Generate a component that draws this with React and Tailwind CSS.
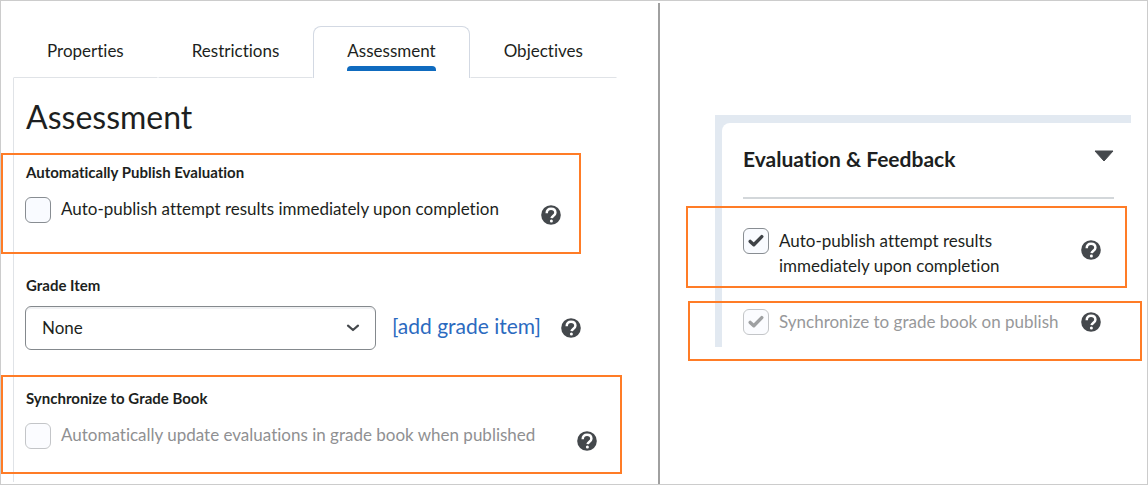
import React, { useState } from 'react';

const TABS = ['Properties', 'Restrictions', 'Assessment', 'Objectives'];

function HelpButton({ label, className = '' }) {
  return (
    <button type="button" aria-label={label} className={`h-5 w-5 shrink-0 cursor-pointer ${className}`}>
      <svg viewBox="0 0 20 20" className="h-5 w-5" aria-hidden="true">
        <circle cx="10" cy="10" r="9.8" fill="#44484c" />
        <path
          d="M5.7 8.2C5.7 5.3 7.4 3.8 10 3.8s4.4 1.6 4.4 3.9c0 2.9-3.6 3-3.8 5.5"
          fill="none"
          stroke="#fff"
          strokeWidth="2.5"
        />
        <circle cx="10.4" cy="16.1" r="1.5" fill="#fff" />
      </svg>
    </button>
  );
}

function Checkbox({ id, disabled = false, defaultChecked = false }) {
  return (
    <span className={`grid h-[26px] w-[26px] shrink-0 ${disabled ? 'opacity-50' : ''}`}>
      <input
        id={id}
        type="checkbox"
        disabled={disabled}
        defaultChecked={defaultChecked}
        className="peer col-start-1 row-start-1 h-[26px] w-[26px] appearance-none rounded-md border border-[#888d92] bg-[#f9fbff]"
      />
      <svg
        viewBox="0 0 26 26"
        className="pointer-events-none invisible col-start-1 row-start-1 h-[26px] w-[26px] peer-checked:visible"
        aria-hidden="true"
      >
        <path
          d="M7.2 13.4L10.8 16.8L18.8 8.6"
          fill="none"
          stroke="#3f4347"
          strokeWidth="3.4"
          strokeLinecap="round"
          strokeLinejoin="round"
        />
      </svg>
    </span>
  );
}

function Tabs({ active, onChange }) {
  return (
    <div role="tablist" className="flex">
      {TABS.map((tab) => (
        <button
          key={tab}
          type="button"
          role="tab"
          aria-selected={tab === active}
          onClick={() => onChange(tab)}
          className={`flex h-[52px] cursor-pointer flex-col items-center px-[33px] pt-3 ${
            tab === active
              ? 'rounded-t-lg border border-b-0 border-[#d3d9e3]'
              : 'border border-transparent border-b-[#e0e3e7]'
          }`}
        >
          <span className="leading-6">{tab}</span>
          {tab === active && <span className="mt-[3px] h-[5px] w-full rounded-t-sm bg-[#0f6bbf]" />}
        </button>
      ))}
    </div>
  );
}

function AssessmentPanel() {
  return (
    <div className="border-l border-[#e0e3e7] pb-2 pl-[11px]">
      <h1 className="pt-[19px] pl-px text-[32px] leading-10">Assessment</h1>

      {/* Auto publish */}
      <section className="mt-4 -ml-6 max-w-[580px] border-2 border-[#ff7c26] pt-[7px] pb-[27px] pl-[22px]">
        <h2 className="pl-px text-[15px] leading-5 font-bold">Automatically Publish Evaluation</h2>
        <div className="mt-[15px] flex items-start">
          <Checkbox id="auto-publish" />
          <label htmlFor="auto-publish" className="ml-[10px] leading-6">
            Auto-publish attempt results immediately upon completion
          </label>
          <HelpButton label="Help with automatic publishing" className="mt-2 ml-[42px]" />
        </div>
      </section>

      {/* Grade item */}
      <section className="mt-[21px]">
        <label htmlFor="grade-item" className="block pl-px text-[15px] leading-5 font-bold">
          Grade Item
        </label>
        <div className="mt-[11px] flex items-center">
          <div className="grid w-full max-w-[351px] items-center">
            <select
              id="grade-item"
              className="col-start-1 row-start-1 h-11 w-full appearance-none rounded-md border border-[#84898d] bg-white pl-4 shadow-[inset_0_2px_0_#f0f1f3]"
            >
              <option>None</option>
            </select>
            <svg
              viewBox="0 0 14 8"
              className="pointer-events-none col-start-1 row-start-1 mr-4 h-2 w-[14px] justify-self-end"
              aria-hidden="true"
            >
              <path
                d="M2 1.7L7 6L12 1.7"
                fill="none"
                stroke="#44484c"
                strokeWidth="2.2"
                strokeLinecap="round"
                strokeLinejoin="round"
              />
            </svg>
          </div>
          <a
            href="#add-grade-item"
            className="mt-2 ml-4 self-start text-[21px] leading-6 whitespace-nowrap text-[#2b6abf]"
          >
            [add grade item]
          </a>
          <HelpButton label="Help with grade items" className="ml-5" />
        </div>
      </section>

      {/* Grade book sync */}
      <section className="mt-[25px] -ml-6 max-w-[621px] border-2 border-[#ff7c26] pt-[11px] pb-[21px] pl-[22px]">
        <h2 className="pl-px text-[15px] leading-5 font-bold">Synchronize to Grade Book</h2>
        <div className="mt-[15px] flex items-start">
          <Checkbox id="grade-book" disabled />
          <label htmlFor="grade-book" className="ml-[10px] leading-6 text-[#8f9092]">
            Automatically update evaluations in grade book when published
          </label>
          <HelpButton label="Help with grade book updates" className="mt-2 ml-[42px]" />
        </div>
      </section>
    </div>
  );
}

function FeedbackPanel() {
  return (
    <div className="mt-[114px] mr-4 ml-[55px] self-start bg-[#e2e9f1] pt-2 pl-[7px]">
      <div className="rounded-tl-lg bg-white pl-[21px]">
        <div className="mr-[17px] flex items-start justify-between border-b-2 border-[#d3d7da] pt-[22px] pb-[24px]">
          <h2 className="text-[21px] leading-7 font-bold">Evaluation &amp; Feedback</h2>
          <button type="button" aria-label="Collapse Evaluation and Feedback" className="mt-[5px] cursor-pointer">
            <svg viewBox="0 0 20 12" className="h-3 w-5" aria-hidden="true">
              <path d="M1 1h18l-9 10z" fill="#44484c" stroke="#44484c" strokeLinejoin="round" />
            </svg>
          </button>
        </div>

        <section className="mt-[7px] mr-1 -ml-[57px] flex items-start border-2 border-[#ff7c26] pt-5 pr-6 pb-2 pl-[55px]">
          <Checkbox id="panel-publish" defaultChecked />
          <label htmlFor="panel-publish" className="ml-[10px] max-w-[250px] leading-[25px]">
            Auto-publish attempt results immediately upon completion
          </label>
          <HelpButton label="Help with automatic publishing" className="mt-3 ml-auto" />
        </section>

        <section className="mt-[13px] -mr-[11px] -mb-[14px] -ml-[55px] flex items-center border-2 border-[#ff7c26] pt-[6px] pr-[39px] pb-6 pl-[53px]">
          <Checkbox id="panel-grade-book" disabled defaultChecked />
          <label htmlFor="panel-grade-book" className="ml-[10px] leading-6 text-[#97989a]">
            Synchronize to grade book on publish
          </label>
          <HelpButton label="Help with grade book updates" className="ml-auto" />
        </section>
      </div>
    </div>
  );
}

export default function App() {
  const [activeTab, setActiveTab] = useState('Assessment');

  return (
    <div className="grid min-h-screen grid-cols-[659fr_487fr] border border-[#cccccc] bg-white font-['Lato',sans-serif] text-[17px] text-[#1d1f21] [font-variant-ligatures:none]">
      <main className="mt-[2px] border-r-2 border-[#a0a0a0] pt-[23px] pb-[2px] pl-3">
        <Tabs active={activeTab} onChange={setActiveTab} />
        <AssessmentPanel />
      </main>
      <FeedbackPanel />
    </div>
  );
}
